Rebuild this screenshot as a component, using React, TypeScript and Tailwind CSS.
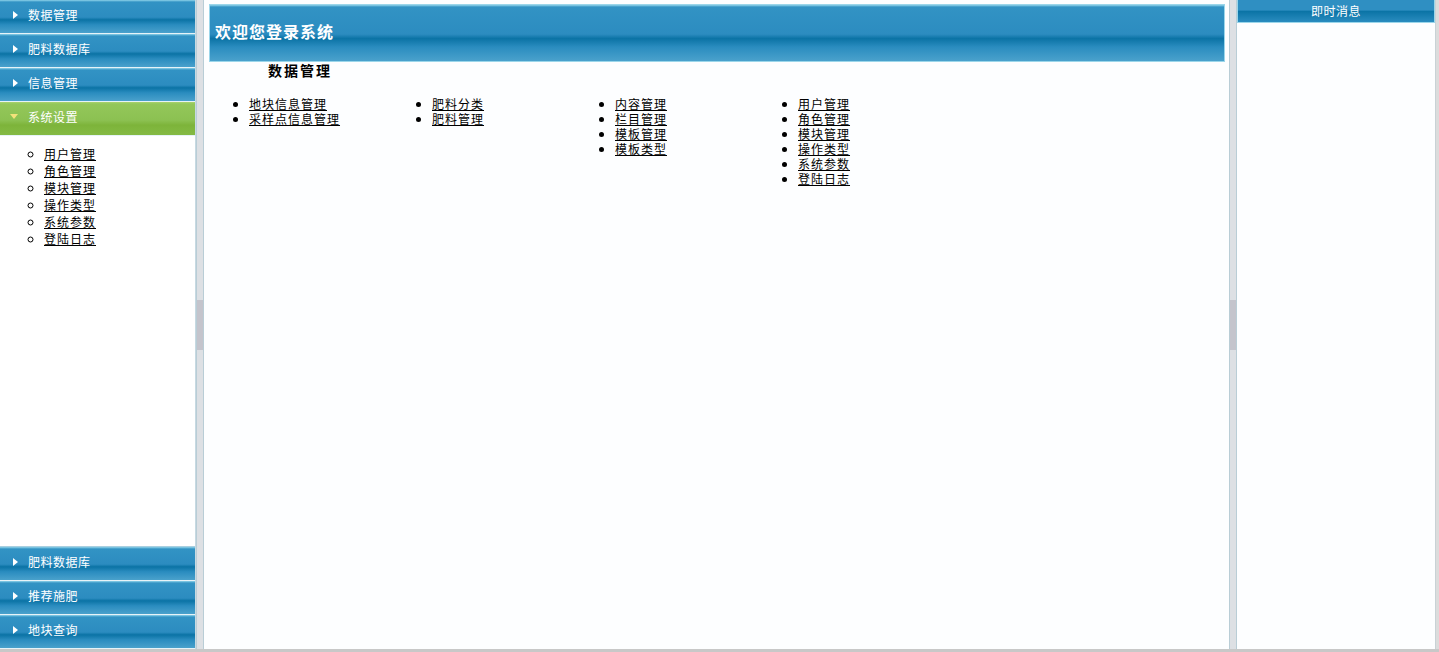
import type { ReactNode } from 'react'

const blueBar =
  'bg-[linear-gradient(to_bottom,#8fd3ea_0px,#3293c4_2px,#2c8cc0_52%,#0b73a5_60%,#2a8cbf_75%,#4aa1cc_100%)]'
const greenBar =
  'bg-[linear-gradient(to_bottom,#a9d46e_0px,#93c75a_2px,#8cc152_55%,#7db43a_70%,#84ba44_100%)]'

const cjk = "font-['Noto_Sans_CJK_SC','Noto_Sans',sans-serif]"

function Arrow({ open }: { open?: boolean }) {
  if (open) {
    return (
      <svg width="8" height="5" viewBox="0 0 8 5" className="shrink-0">
        <path d="M0 0 L8 0 L4 5 Z" fill="#f3e27a" />
      </svg>
    )
  }
  return (
    <svg width="5" height="8" viewBox="0 0 5 8" className="shrink-0">
      <path d="M0 0 L5 4 L0 8 Z" fill="#ffffff" />
    </svg>
  )
}

function NavHeader({ label, open }: { label: string; open?: boolean }) {
  return (
    <div
      className={`flex h-[34px] shrink-0 items-center gap-[10px] border-b border-[#e6f3f8] pb-[4px] ${
        open ? 'pl-[10px]' : 'pl-[13px]'
      } ${open ? greenBar : blueBar}`}
    >
      <Arrow open={open} />
      <span className={`text-[12px] tracking-[0.5px] text-white ${cjk}`}>{label}</span>
    </div>
  )
}

function Splitter() {
  return (
    <div className="flex w-[8px] shrink-0 items-center border-x border-[#b9cdd6] bg-[#dde0e4]">
      <div className="h-[50px] w-full bg-[#c4c4cc]" />
    </div>
  )
}

function LinkList({ items }: { items: string[] }): ReactNode {
  return (
    <ul className={`list-disc pl-[13px] text-[12px] leading-[15px] tracking-[1px] text-black ${cjk}`}>
      {items.map((it) => (
        <li key={it}>
          <a href="#" className="underline">
            {it}
          </a>
        </li>
      ))}
    </ul>
  )
}

const columns = [
  ['地块信息管理', '采样点信息管理'],
  ['肥料分类', '肥料管理'],
  ['内容管理', '栏目管理', '模板管理', '模板类型'],
  ['用户管理', '角色管理', '模块管理', '操作类型', '系统参数', '登陆日志'],
]

const settings = ['用户管理', '角色管理', '模块管理', '操作类型', '系统参数', '登陆日志']

export default function App() {
  return (
    <div className="flex h-[652px] w-full flex-col bg-white">
      <div className="flex min-h-0 flex-1">
        {/* 左侧菜单 */}
        <div className="flex w-[196px] shrink-0 flex-col border-r border-[#c7d9e2] bg-white">
          <NavHeader label="数据管理" />
          <NavHeader label="肥料数据库" />
          <NavHeader label="信息管理" />
          <NavHeader label="系统设置" open />
          <div className="flex-1 border-b border-[#a9cfe0] pl-[31px] pt-[9px]">
            <ul className={`list-[circle] pl-[13px] text-[12px] leading-[17px] tracking-[1px] text-black ${cjk}`}>
              {settings.map((s) => (
                <li key={s}>
                  <a href="#" className="underline">
                    {s}
                  </a>
                </li>
              ))}
            </ul>
          </div>
          <NavHeader label="肥料数据库" />
          <NavHeader label="推荐施肥" />
          <NavHeader label="地块查询" />
        </div>

        <Splitter />

        {/* 主内容 */}
        <div className="min-w-0 flex-1 bg-[#fdfeff] pl-[5px] pr-[4px] pt-[4px]">
          <div
            className={`flex h-[58px] items-center border border-[#9bd6ea] pb-[4px] pl-[5px] ${blueBar}`}
          >
            <span className="text-[16px] font-bold tracking-[1px] text-white [font-family:'Noto_Sans_CJK_SC',serif]">
              欢迎您登录系统
            </span>
          </div>
          <div className={`ml-[59px] mt-[-1px] text-[14px] font-bold leading-[18px] tracking-[2px] text-black ${cjk}`}>
            数据管理
          </div>
          <div className="mt-[17px] flex pl-[27px]">
            {columns.map((col, i) => (
              <div key={i} className="w-[183px] shrink-0">
                <LinkList items={col} />
              </div>
            ))}
          </div>
        </div>

        <Splitter />

        {/* 右侧 即时消息 */}
        <div className="flex w-[198px] shrink-0 flex-col bg-[#fdfeff]">
          <div
            className={`flex h-[23px] items-center justify-center border-x border-b border-[#9bd6ea] text-[12px] tracking-[0.5px] text-white ${cjk} bg-[linear-gradient(to_bottom,#2f8fc2_0%,#2f8fc2_45%,#0b74a6_52%,#2a8cbf_100%)]`}
          >
            即时消息
          </div>
          <div className="flex-1" />
        </div>
        <div className="w-[4px] shrink-0 border-l border-[#c9d2d6] bg-[#dcdcdc]" />
      </div>
      <div className="h-[3px] shrink-0 bg-[#c8c8c8]" />
    </div>
  )
}
